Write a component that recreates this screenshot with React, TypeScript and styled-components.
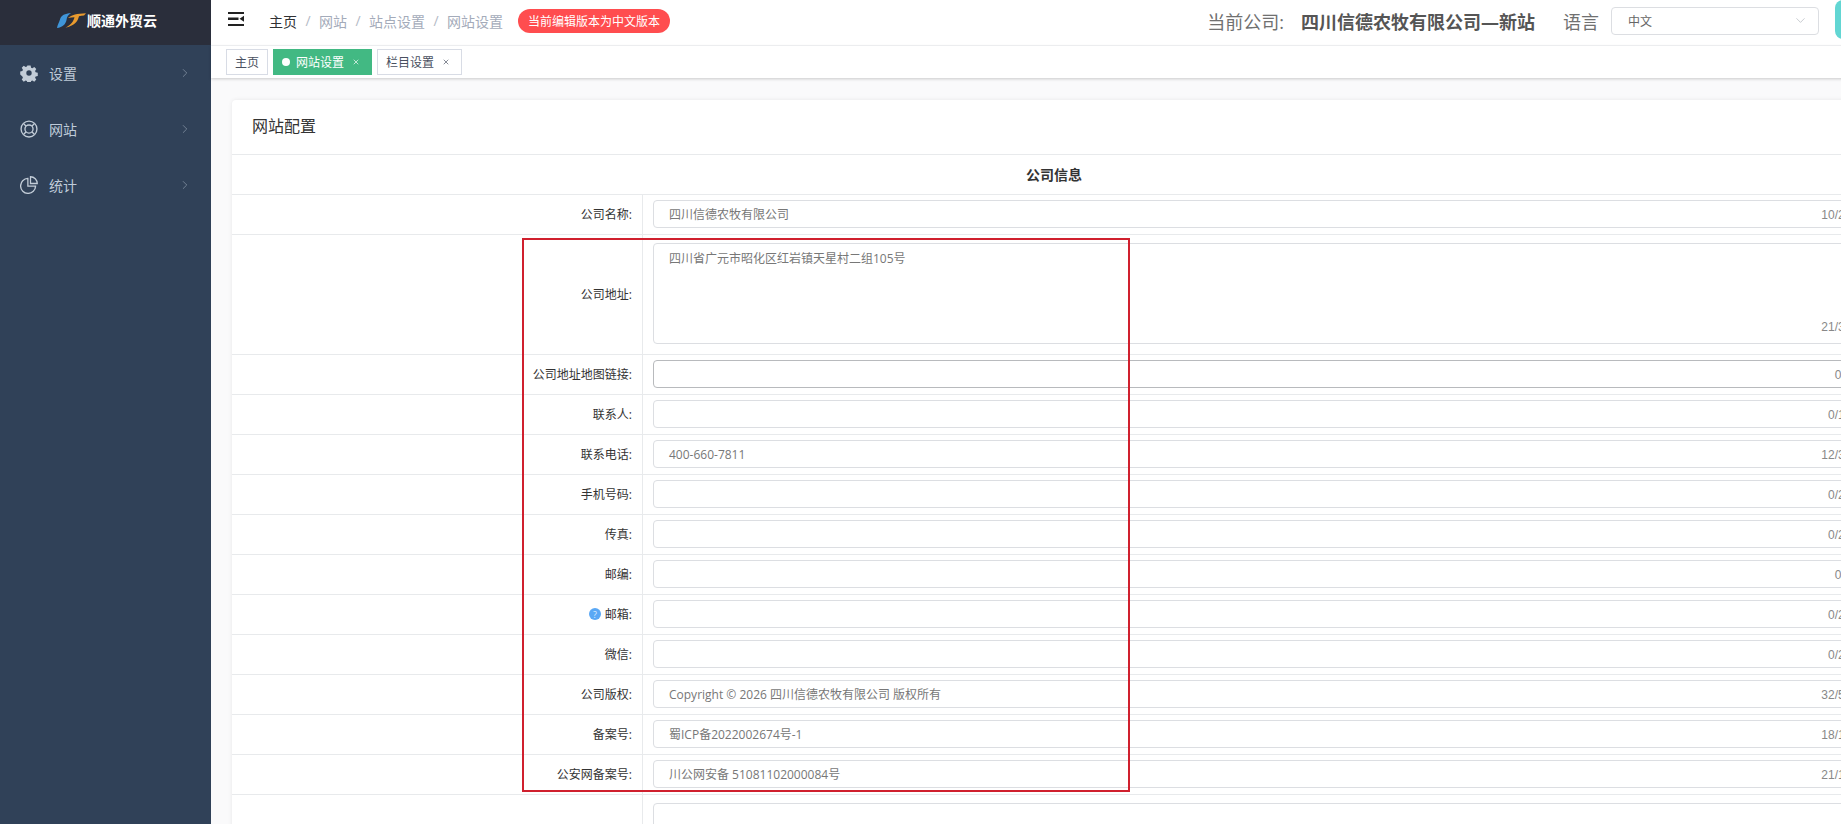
import styled, { createGlobalStyle } from "styled-components";
import { ChevronRight, ChevronDown, X } from "lucide-react";

const font = `"Open Sans", "Noto Sans CJK SC", sans-serif`;

interface Field {
  label: string;
  value?: string;
  count: string;
  help?: boolean;
  hover?: boolean;
  multi?: boolean;
}

const fields: Field[] = [
  { label: "公司名称", value: "四川信德农牧有限公司", count: "10/200" },
  { label: "公司地址", value: "四川省广元市昭化区红岩镇天星村二组105号", count: "21/300", multi: true },
  { label: "公司地址地图链接", count: "0/50", hover: true },
  { label: "联系人", count: "0/100" },
  { label: "联系电话", value: "400-660-7811", count: "12/300" },
  { label: "手机号码", count: "0/200" },
  { label: "传真", count: "0/200" },
  { label: "邮编", count: "0/50" },
  { label: "邮箱", count: "0/200", help: true },
  { label: "微信", count: "0/200" },
  { label: "公司版权", value: "Copyright © 2026 四川信德农牧有限公司 版权所有", count: "32/500" },
  { label: "备案号", value: "蜀ICP备2022002674号-1", count: "18/100" },
  { label: "公安网备案号", value: "川公网安备 51081102000084号", count: "21/100" },
];

const GearIcon = () => (
  <svg width="18" height="18" viewBox="0 0 24 24">
    <path
      fill="#c3cdd8"
      fillRule="evenodd"
      d="M9.6 1h4.8l.7 3.2 1.9.8 2.8-1.8 3 3-1.8 2.8.8 1.9 3.2.7v4.8l-3.2.7-.8 1.9 1.8 2.8-3 3-2.8-1.8-1.9.8-.7 3.2H9.6l-.7-3.2-1.9-.8-2.8 1.8-3-3 1.8-2.8-.8-1.9L-1 14.4V9.6l3.2-.7.8-1.9-1.8-2.8 3-3L7 3l1.9-.8zM12 8a4 4 0 1 0 0 8 4 4 0 0 0 0-8z"
      transform="translate(1.2 1.2) scale(.9)"
    />
  </svg>
);

const RingIcon = () => (
  <svg width="18" height="18" viewBox="0 0 24 24" fill="none" stroke="#c3cdd8" strokeWidth="1.8">
    <circle cx="12" cy="12" r="10.6" />
    <circle cx="12" cy="12" r="5.4" />
    <path d="M5 5l3.2 3.2M19 5l-3.2 3.2M5 19l3.2-3.2M19 19l-3.2-3.2" />
  </svg>
);

const PieIcon = () => (
  <svg width="18" height="18" viewBox="0 0 24 24" fill="none" stroke="#c3cdd8" strokeWidth="1.7">
    <path d="M10.5 3.2a10 10 0 1 0 10.3 10.3H10.5z" />
    <path d="M14 1v9h9a9 9 0 0 0-9-9z" />
  </svg>
);

const menu = [
  { name: "设置", icon: <GearIcon /> },
  { name: "网站", icon: <RingIcon /> },
  { name: "统计", icon: <PieIcon /> },
];

function App() {
  return (
    <Page>
      <GlobalStyle />
      <Sidebar>
        <Brand>
          <svg width="29" height="15" viewBox="0 0 29 15">
            <path fill="#3f95d8" d="M0 15C.5 11.500 2 10 3 6.500 4 2.500 8 .3 14 .3 11 1.800 10 4 9.500 7 8.800 11 5.500 14.500 0 15z" />
            <path fill="#e99a2e" d="M11 5C14.500 2 20 .6 29 .3L27 2.600C25 2.700 23.500 2.900 22 3.300 21 7.500 18.500 12.500 8.500 14.800 14.500 11.500 16.500 8 17.500 4.200 15.500 4.300 13 4.600 11 5z" />
          </svg>
          <BrandName>顺通外贸云</BrandName>
        </Brand>
        {menu.map((item) => (
          <MenuItem key={item.name}>
            <MenuIcon>{item.icon}</MenuIcon>
            <MenuName>{item.name}</MenuName>
            <ChevronRight size={14} strokeWidth={1} color="#9fadbb" />
          </MenuItem>
        ))}
      </Sidebar>
      <Main>
        <TopBar>
          <ToggleIcon width="16" height="14" viewBox="0 0 16 14">
            <path fill="#222" d="M0 0h16v2H0zM0 5.500h10.500v2.500H0zM0 12h16v2H0zM16 3.800v6L11.500 6.800z" />
          </ToggleIcon>
          <Crumbs>
            <CrumbCurrent>主页</CrumbCurrent>
            <CrumbSep>/</CrumbSep>
            <Crumb>网站</Crumb>
            <CrumbSep>/</CrumbSep>
            <Crumb>站点设置</Crumb>
            <CrumbSep>/</CrumbSep>
            <Crumb>网站设置</Crumb>
          </Crumbs>
          <EditBadge>当前编辑版本为中文版本</EditBadge>
          <TopRight>
            <CompanyLabel>当前公司:</CompanyLabel>
            <CompanyName>四川信德农牧有限公司—新站</CompanyName>
            <LangLabel>语言</LangLabel>
            <LangSelect>
              <span>中文</span>
              <ChevronDown size={15} strokeWidth={1} color="#a8adb6" />
            </LangSelect>
            <TealButton />
          </TopRight>
        </TopBar>
        <TagBar>
          <Tag>主页</Tag>
          <Tag $active>
            <TagDot />
            网站设置
            <TagClose><X size={8} strokeWidth={2} /></TagClose>
          </Tag>
          <Tag>
            栏目设置
            <TagClose><X size={8} strokeWidth={2} /></TagClose>
          </Tag>
        </TagBar>
        <Content>
          <Card>
            <CardTitle>网站配置</CardTitle>
            <SectionTitle>公司信息</SectionTitle>
            {fields.map((f) => (
              <Row key={f.label} $multi={f.multi}>
                <LabelCell>
                  {f.help && <HelpDot>?</HelpDot>}
                  {f.label}:
                </LabelCell>
                <ValueCell>
                  <InputBox $multi={f.multi} $hover={f.hover}>
                    {f.value}
                    <Counter $multi={f.multi}>{f.count}</Counter>
                  </InputBox>
                </ValueCell>
              </Row>
            ))}
            <Row $multi>
              <LabelCell />
              <ValueCell>
                <InputBox $multi />
              </ValueCell>
            </Row>
          </Card>
        </Content>
      </Main>
      <Marker />
    </Page>
  );
}

export default App;

const GlobalStyle = createGlobalStyle`
  html, body {
    margin: 0;
    height: 100%;
    overflow: hidden;
    background: #fff;
  }
  * {
    box-sizing: border-box;
  }
`;

const Page = styled.div`
  display: flex;
  width: 1897px;
  height: 824px;
  overflow: hidden;
  font-family: ${font};
  font-size: 12px;
  color: #333;
`;

const Sidebar = styled.aside`
  flex: 0 0 211px;
  background: #304158;
`;

const Brand = styled.div`
  height: 45px;
  padding: 0 0 5px 57px;
  display: flex;
  align-items: center;
  gap: 1px;
  background: #2a2e3b;
`;

const BrandName = styled.span`
  font-size: 14px;
  font-weight: 700;
  color: #fff;
`;

const MenuItem = styled.div`
  height: 56px;
  padding: 0 19px 0 20px;
  display: flex;
  align-items: center;
  color: #bfcbd9;
`;

const MenuIcon = styled.span`
  width: 29px;
  display: flex;
`;

const MenuName = styled.span`
  flex: 1;
  font-size: 14px;
`;

const Main = styled.div`
  flex: 1;
  min-width: 0;
  display: flex;
  flex-direction: column;
`;

const TopBar = styled.header`
  height: 46px;
  padding: 0 0 4px 17px;
  display: flex;
  align-items: center;
  background: #fff;
  border-bottom: 1px solid #f4f5f7;
`;

const ToggleIcon = styled.svg`
  margin-bottom: 3px;
`;

const Crumbs = styled.nav`
  margin-left: 25px;
  display: flex;
  align-items: center;
  font-size: 14px;
`;

const CrumbCurrent = styled.span`
  color: #303133;
`;

const Crumb = styled.span`
  color: #a4abba;
`;

const CrumbSep = styled.span`
  width: 22px;
  text-align: center;
  color: #b4bac6;
`;

const EditBadge = styled.span`
  margin-left: 15px;
  height: 24px;
  padding: 0 10px;
  display: flex;
  align-items: center;
  border-radius: 12px;
  background: #ff4d4f;
  color: #fff;
`;

const TopRight = styled.div`
  margin-left: auto;
  display: flex;
  align-items: center;
  height: 100%;
`;

const CompanyLabel = styled.span`
  font-size: 18px;
  color: #707070;
`;

const CompanyName = styled.span`
  margin-left: 17px;
  font-size: 18px;
  font-weight: 700;
  color: #555;
`;

const LangLabel = styled.span`
  margin-left: 28px;
  font-size: 18px;
  color: #707070;
`;

const LangSelect = styled.div`
  margin-left: 12px;
  width: 208px;
  height: 28px;
  padding: 0 10px 0 16px;
  display: flex;
  align-items: center;
  justify-content: space-between;
  border: 1px solid #dcdee2;
  border-radius: 4px;
  color: #666;
`;

const TealButton = styled.div`
  align-self: flex-start;
  margin-left: 16px;
  width: 62px;
  height: 39px;
  border-radius: 8px;
  background: #62d6d3;
`;

const TagBar = styled.div`
  height: 32px;
  padding: 3px 0 0 15px;
  display: flex;
  gap: 5px;
  background: #fff;
  box-shadow: 0 1px 3px 0 rgba(0, 0, 0, 0.2);
  position: relative;
`;

const Tag = styled.div<{ $active?: boolean }>`
  height: 26px;
  padding: 0 8px;
  display: flex;
  align-items: center;
  border: 1px solid ${(p) => (p.$active ? "#42b983" : "#d8dce5")};
  background: ${(p) => (p.$active ? "#42b983" : "#fff")};
  color: ${(p) => (p.$active ? "#fff" : "#495060")};
`;

const TagDot = styled.span`
  width: 8px;
  height: 8px;
  margin-right: 6px;
  border-radius: 50%;
  background: #fff;
`;

const TagClose = styled.span`
  margin: 0 3px 0 8px;
  display: flex;
`;

const Content = styled.main`
  flex: 1;
  min-height: 0;
  padding: 22px 21px 0;
  background: #fafafb;
`;

const Card = styled.section`
  background: #fff;
  border-radius: 4px 4px 0 0;
  box-shadow: 0 0 4px rgba(0, 0, 0, 0.08);
  height: 800px;
`;

const CardTitle = styled.h2`
  margin: 0;
  height: 55px;
  padding: 0 0 4px 20px;
  display: flex;
  align-items: center;
  font-size: 16px;
  font-weight: 400;
  color: #333;
  border-bottom: 1px solid #e8eaec;
`;

const SectionTitle = styled.div`
  height: 40px;
  padding-bottom: 2px;
  display: flex;
  align-items: center;
  justify-content: center;
  font-size: 14px;
  font-weight: 700;
  border-bottom: 1px solid #e8eaec;
`;

const Row = styled.div<{ $multi?: boolean }>`
  height: ${(p) => (p.$multi ? 120 : 40)}px;
  display: flex;
  border-bottom: 1px solid #e8eaec;
`;

const LabelCell = styled.div`
  flex: 0 0 410px;
  padding: 0 10px 1px 0;
  display: flex;
  align-items: center;
  justify-content: flex-end;
  color: #333;
`;

const ValueCell = styled.div`
  flex: 1;
  min-width: 0;
  padding: 5px 10px;
  border-left: 1px solid #e8eaec;
`;

const InputBox = styled.div<{ $multi?: boolean; $hover?: boolean }>`
  position: relative;
  height: ${(p) => (p.$multi ? 101 : 28)}px;
  margin-top: ${(p) => (p.$multi ? 3 : 0)}px;
  padding: ${(p) => (p.$multi ? "6px 15px" : "1px 15px 0")};
  line-height: ${(p) => (p.$multi ? "18px" : "26px")};
  border: 1px solid ${(p) => (p.$hover ? "#b8babd" : "#dcdee2")};
  border-radius: 4px;
  color: #777;
`;

const Counter = styled.span<{ $multi?: boolean }>`
  position: absolute;
  right: 7px;
  ${(p) => (p.$multi ? "bottom: 7px;" : "top: 1px;")}
  font-family: "Liberation Sans", sans-serif;
  color: #888;
`;

const HelpDot = styled.span`
  width: 12px;
  height: 12px;
  margin-right: 4px;
  display: flex;
  align-items: center;
  justify-content: center;
  border-radius: 50%;
  background: #5aa8f5;
  color: #dcecff;
  font-size: 9px;
  line-height: 1;
`;

const Marker = styled.div`
  position: absolute;
  left: 522px;
  top: 238px;
  width: 608px;
  height: 554px;
  border: 2px solid #d0202e;
  pointer-events: none;
`;
